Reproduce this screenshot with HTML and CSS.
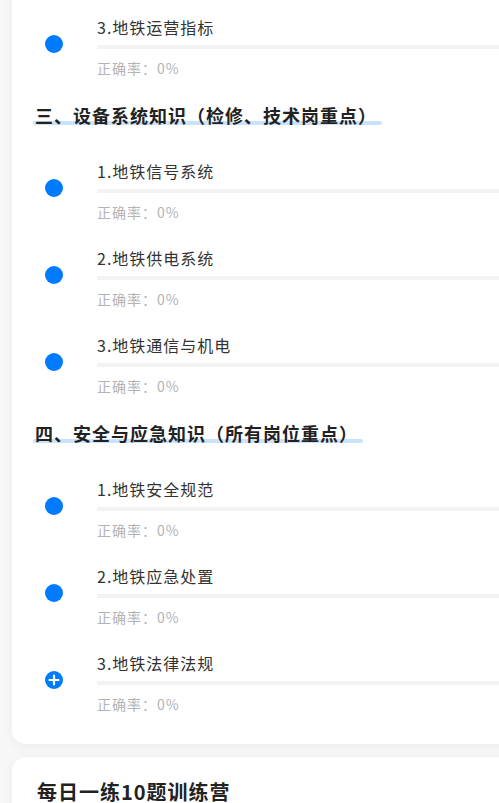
FILE: index.html
```html
<!DOCTYPE html>
<html lang="zh-CN">
<head>
<meta charset="utf-8">
<title>题库</title>
<link rel="stylesheet" href="styles.css">
</head>
<body>
<div class="page">
  <div class="card">
    <div class="item">
      <span class="dot"></span>
      <div class="info">
        <div class="title">3.地铁运营指标</div>
        <div class="bar"></div>
        <div class="rate">正确率：0%</div>
      </div>
    </div>

    <div class="sec"><span class="sec-text">三、设备系统知识（检修、技术岗重点）</span></div>

    <div class="item">
      <span class="dot"></span>
      <div class="info">
        <div class="title">1.地铁信号系统</div>
        <div class="bar"></div>
        <div class="rate">正确率：0%</div>
      </div>
    </div>
    <div class="item">
      <span class="dot"></span>
      <div class="info">
        <div class="title">2.地铁供电系统</div>
        <div class="bar"></div>
        <div class="rate">正确率：0%</div>
      </div>
    </div>
    <div class="item">
      <span class="dot"></span>
      <div class="info">
        <div class="title">3.地铁通信与机电</div>
        <div class="bar"></div>
        <div class="rate">正确率：0%</div>
      </div>
    </div>

    <div class="sec"><span class="sec-text">四、安全与应急知识（所有岗位重点）</span></div>

    <div class="item">
      <span class="dot"></span>
      <div class="info">
        <div class="title">1.地铁安全规范</div>
        <div class="bar"></div>
        <div class="rate">正确率：0%</div>
      </div>
    </div>
    <div class="item">
      <span class="dot"></span>
      <div class="info">
        <div class="title">2.地铁应急处置</div>
        <div class="bar"></div>
        <div class="rate">正确率：0%</div>
      </div>
    </div>
    <div class="item">
      <span class="dot dot-plus">
        <svg viewBox="0 0 18 18" width="18" height="18"><path d="M9 4.5v9M4.5 9h9" stroke="#fff" stroke-width="2.2" stroke-linecap="round" fill="none"/></svg>
      </span>
      <div class="info">
        <div class="title">3.地铁法律法规</div>
        <div class="bar"></div>
        <div class="rate">正确率：0%</div>
      </div>
    </div>
  </div>

  <div class="card card-next">
    <div class="card-title">每日一练10题训练营</div>
  </div>
</div>
</body>
</html>
```

FILE: styles.css
```css
html, body {
  margin: 0;
  padding: 0;
  background: #f7f7f7;
  overflow: hidden;
  font-family: "Noto Sans CJK SC", "Noto Sans", sans-serif;
}

.page {
  padding-left: 12px;
  width: 560px;
}

.card {
  background: #fff;
  border-radius: 14px;
  box-shadow: 0 2px 12px rgba(0, 0, 0, 0.05);
  margin-top: -10px;
  padding: 13px 0 18px;
}

.item {
  display: flex;
  align-items: flex-start;
  padding: 12px 0 12.5px 33px;
}

.dot {
  flex: none;
  width: 18px;
  height: 18px;
  border-radius: 50%;
  background: #007aff;
  margin-top: 20px;
  display: block;
}

.dot-plus svg {
  display: block;
}

.info {
  flex: 1;
  margin-left: 34px;
}

.title {
  font-size: 16px;
  line-height: 24px;
  color: #333;
  letter-spacing: 1px;
}

.bar {
  height: 4px;
  background: #f3f3f3;
  margin-top: 6px;
}

.rate {
  font-size: 14px;
  line-height: 20px;
  color: #b3b3b3;
  letter-spacing: 1px;
  margin-top: 8.5px;
}

.sec {
  padding-left: 21px;
  margin: 12px 0 19px;
  font-size: 18px;
  line-height: 26px;
  font-weight: 700;
  color: #222;
  letter-spacing: 1px;
}

.sec-text {
  position: relative;
  z-index: 0;
  display: inline-block;
  padding: 0 5px 0 2px;
}

.sec-text::after {
  content: "";
  position: absolute;
  left: 0;
  right: 0;
  bottom: 3px;
  height: 4px;
  border-radius: 2px;
  background: #c9e3fd;
  z-index: -1;
}

.card-next {
  margin-top: 13px;
  padding: 21px 0 40px 25px;
}

.card-title {
  font-size: 20px;
  line-height: 28px;
  font-weight: 700;
  color: #222;
  letter-spacing: 1px;
}
```
